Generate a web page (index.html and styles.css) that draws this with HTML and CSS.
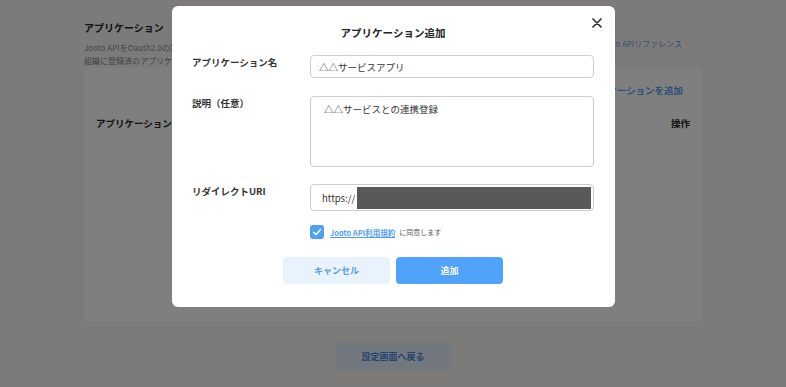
FILE: index.html
```html
<!DOCTYPE html>
<html lang="ja">

<head>
    <meta charset="UTF-8">
    <meta name="viewport" content="width=device-width, initial-scale=1.0">
    <title>アプリケーション</title>
    <link rel="stylesheet" href="styles.css">
</head>

<body>

    <div class="page">
        <div class="page_header">
            <div class="page_intro">
                <h1>アプリケーション</h1>
                <p>Jooto APIをOauth2.0の認可フローで利用するアプリケーションを登録できます。</p>
                <p>組織に登録済のアプリケーションの一覧です。</p>
            </div>
            <a class="ref_link" href="#">Jooto APIリファレンス</a>
        </div>

        <div class="app_card">
            <div class="card_actions">
                <a class="add_link" href="#">+ アプリケーションを追加</a>
            </div>
            <div class="table_head">
                <span>アプリケーション名</span>
                <span>操作</span>
            </div>
        </div>

        <div class="back_row">
            <button class="back_btn" type="button">設定画面へ戻る</button>
        </div>
    </div>

    <!-- modal -->
    <div class="overlay">
        <div class="modal">
            <button class="close_btn" type="button" aria-label="閉じる">
                <svg width="10" height="10" viewBox="0 0 10 10">
                    <path d="M1 1 L9 9 M9 1 L1 9" stroke="#333" stroke-width="1.7" stroke-linecap="round" />
                </svg>
            </button>
            <h2 class="modal_title">アプリケーション追加</h2>

            <form class="app_form">
                <div class="form_row">
                    <label for="app_name">アプリケーション名</label>
                    <input class="field field_name" type="text" id="app_name" value="△△サービスアプリ">
                </div>
                <div class="form_row">
                    <label for="app_desc">説明（任意）</label>
                    <textarea class="field field_desc" id="app_desc">△△サービスとの連携登録</textarea>
                </div>
                <div class="form_row">
                    <label for="app_uri">リダイレクトURI</label>
                    <div class="field field_uri" id="app_uri">
                        <span>https://</span>
                        <span class="masked"></span>
                    </div>
                </div>

                <div class="agree_row">
                    <span class="checkbox">
                        <svg width="10" height="10" viewBox="0 0 10 10">
                            <path d="M1.6 5.2 L4 7.5 L8.5 2.4" fill="none" stroke="#fff" stroke-width="1.5" stroke-linecap="round" stroke-linejoin="round" />
                        </svg>
                    </span>
                    <a class="terms_link" href="#">Jooto API利用規約</a>
                    <span class="agree_text">に同意します</span>
                </div>

                <div class="button_row">
                    <button class="btn btn_cancel" type="button">キャンセル</button>
                    <button class="btn btn_submit" type="submit">追加</button>
                </div>
            </form>
        </div>
    </div>

</body>

</html>
```

FILE: styles.css
```css
body {
    font-family: "Noto Sans CJK JP", "Noto Sans", sans-serif;
    margin: 0;
    padding: 0;
    background-color: #faf7f3;
    color: #222;
    height: 387px;
    overflow: hidden;
}

.page {
    width: 618px;
    margin: 0 auto;
    padding-top: 20px;
}

.page_header {
    display: flex;
    justify-content: space-between;
    align-items: flex-start;
    padding-right: 20px;
}

.page_intro h1 {
    margin: 0 0 5px;
    font-size: 10px;
    line-height: 16px;
    font-weight: 700;
}

.page_intro p {
    margin: 0;
    font-size: 8px;
    line-height: 13px;
    color: #888;
}

.ref_link {
    margin-top: 17px;
    font-size: 8px;
    line-height: 13px;
    color: #5c9ef0;
    text-decoration: none;
}

.app_card {
    margin-top: 1px;
    height: 254px;
    background-color: #fff;
    border-radius: 6px;
}

.card_actions {
    display: flex;
    justify-content: flex-end;
    padding: 14px 19px 0;
}

.add_link {
    font-size: 9.5px;
    line-height: 16px;
    font-weight: 700;
    color: #5c9ef0;
    text-decoration: none;
}

.table_head {
    display: flex;
    justify-content: space-between;
    padding: 17px 12px 0;
    font-size: 9.5px;
    line-height: 16px;
    font-weight: 700;
}

.back_row {
    display: flex;
    justify-content: center;
    margin-top: 21px;
}

.back_btn {
    width: 117px;
    height: 27px;
    border: none;
    border-radius: 5px;
    background-color: #e6f0fd;
    color: #4a8ae0;
    font-family: inherit;
    font-size: 9px;
    font-weight: 700;
}

/* modal */
.overlay {
    position: fixed;
    top: 0;
    left: 0;
    right: 0;
    bottom: 0;
    background-color: rgba(0, 0, 0, 0.5);
}

.modal {
    position: absolute;
    top: 6px;
    left: 172px;
    width: 443px;
    box-sizing: border-box;
    padding: 19px 21px 23px 20px;
    background-color: #fff;
    border-radius: 6px;
}

.close_btn {
    position: absolute;
    top: 12px;
    right: 13px;
    padding: 0;
    border: none;
    background: none;
    width: 10px;
    height: 10px;
}

.close_btn svg {
    display: block;
}

.modal_title {
    margin: 0;
    text-align: center;
    font-size: 10.5px;
    line-height: 16px;
    font-weight: 700;
    color: #222;
}

.app_form {
    margin-top: 14px;
    display: flex;
    flex-direction: column;
}

.form_row {
    display: grid;
    grid-template-columns: 118px 284px;
    margin-bottom: 18px;
}

.form_row:nth-child(2) {
    margin-bottom: 17px;
}

.form_row label {
    padding-top: 0;
    font-size: 9.5px;
    line-height: 14px;
    font-weight: 700;
    color: #333;
}

.field {
    box-sizing: border-box;
    width: 284px;
    margin: 0;
    border: 1px solid #ccc;
    border-radius: 4px;
    padding: 0 11px;
    font-family: inherit;
    font-size: 9.5px;
    color: #333;
    background-color: #fff;
}

.field_name {
    height: 23px;
    padding-left: 8px;
}

.field_desc {
    height: 71px;
    padding-top: 5px;
    padding-left: 13px;
    line-height: 14px;
    resize: none;
    display: block;
}

.field_uri {
    height: 27px;
    display: flex;
    align-items: center;
    padding-right: 2px;
}

.field_uri .masked {
    flex: 1;
    height: 22px;
    margin-left: 2px;
    background-color: #595959;
}

.agree_row {
    display: flex;
    align-items: center;
    margin-left: 118px;
    margin-top: -4px;
    height: 14px;
}

.checkbox {
    width: 14px;
    height: 14px;
    border-radius: 3px;
    background-color: #4f9ff7;
    display: flex;
    align-items: center;
    justify-content: center;
}

.terms_link {
    margin-left: 6px;
    font-size: 7.5px;
    font-weight: 700;
    color: #4f9ff7;
    text-decoration: underline;
}

.agree_text {
    margin-left: 4px;
    font-size: 7px;
    color: #555;
}

.button_row {
    display: flex;
    justify-content: center;
    gap: 6px;
    margin-top: 18px;
}

.btn {
    width: 107px;
    height: 27px;
    border: none;
    border-radius: 4px;
    font-family: inherit;
    font-size: 9px;
    font-weight: 700;
}

.btn_cancel {
    background-color: #e9f3fe;
    color: #5b9de6;
}

.btn_submit {
    background-color: #51a2fb;
    color: #fff;
}
```
